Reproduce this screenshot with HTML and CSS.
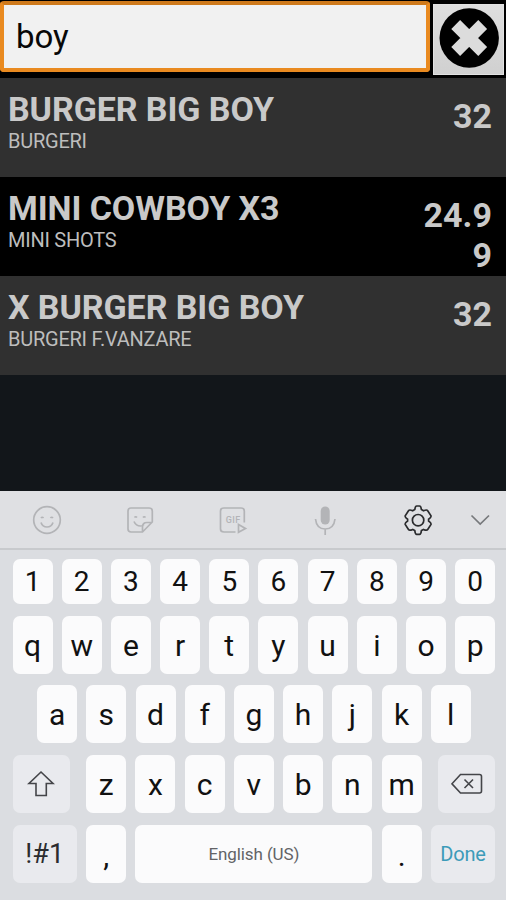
FILE: index.html
```html
<!DOCTYPE html>
<html lang="en">
<head>
<meta charset="utf-8">
<title>Product search</title>
<link rel="stylesheet" href="styles.css">
</head>
<body>
<main class="screen">
  <header class="search">
    <div class="field">boy</div>
    <div class="clear">
      <svg width="60" height="60" viewBox="0 0 60 60"><circle cx="30.2" cy="30" r="29.700" fill="#000"/><path d="M16.700 16.500 43.700 43.500M43.700 16.500 16.700 43.500" stroke="#dcdcdc" stroke-width="12.500"/></svg>
    </div>
  </header>
  <section class="list">
    <article class="item"><div class="info"><div class="name">BURGER BIG BOY</div><div class="cat">BURGERI</div></div><div class="price">32</div></article>
    <article class="item dark"><div class="info"><div class="name">MINI COWBOY X3</div><div class="cat">MINI SHOTS</div></div><div class="price">24.99</div></article>
    <article class="item"><div class="info"><div class="name">X BURGER BIG BOY</div><div class="cat">BURGERI F.VANZARE</div></div><div class="price">32</div></article>
  </section>
  <section class="keyboard">
    <div class="tools">
      <svg class="tool" viewBox="0 0 32 32"><circle cx="16" cy="16" r="13.300"/><path d="M10 14q1.200-1.500 2.500 0M19.500 14q1.200-1.500 2.500 0M10 18.500q1.500 4.500 6 4.500t6-4.500"/></svg>
      <svg class="tool" viewBox="0 0 32 32"><path d="M7 4H25Q28.300 4 28.300 7V18L18.500 28H7Q4 28 4 25V7Q4 4 7 4ZM18.500 28V23Q18.500 18.500 23 18.500H28M10.500 13.500q1.200-1.500 2.500 0M19 13.500q1.200-1.500 2.500 0M10 17.500q2 4.500 6.500 4.500 2 0 3.500-1.500"/></svg>
      <svg class="tool" viewBox="0 0 32 32"><path d="M18.500 28H7Q3.500 28 3.500 25V7Q3.500 4 7 4H24Q27.300 4 27.300 7V18.500M21.500 20.500V28.300L28.500 24.400Z"/><text x="8.700" y="19.300">GIF</text></svg>
      <svg class="tool" viewBox="0 0 32 32"><rect class="solid" x="11.700" y="2.500" width="9" height="18" rx="4.500"/><path d="M6.500 15Q7.500 25 16.200 25T26 15M16.200 25V31"/></svg>
      <svg class="tool gear" viewBox="0 0 32 32"><path d="M12.800 5.600Q13.200 2 14.700 2H17.500Q19 2 19.400 5.600L21.500 6.800Q24.800 5.300 25.700 6.700L29 11.800Q29.500 13.300 26.600 15.300V17Q29.500 19 29 20.400L25.700 25.500Q24.800 26.900 21.500 25.400L19.400 26.600Q19 30.300 17.500 30.300H14.700Q13.200 30.300 12.800 26.600L10.700 25.400Q7.400 26.900 6.500 25.500L3.200 20.400Q2.700 19 5.600 17V15.300Q2.700 13.300 3.200 11.800L6.500 6.700Q7.400 5.300 10.700 6.800Z"/><circle cx="16.100" cy="16.200" r="5.700"/></svg>
      <svg class="tool chevron" viewBox="0 0 32 32"><path d="M7.500 11.500 16.200 20 25 11.500"/></svg>
    </div>
    <div class="keys">
      <div class="row digits"><span>1</span><span>2</span><span>3</span><span>4</span><span>5</span><span>6</span><span>7</span><span>8</span><span>9</span><span>0</span></div>
      <div class="row"><span>q</span><span>w</span><span>e</span><span>r</span><span>t</span><span>y</span><span>u</span><span>i</span><span>o</span><span>p</span></div>
      <div class="row middle"><span>a</span><span>s</span><span>d</span><span>f</span><span>g</span><span>h</span><span>j</span><span>k</span><span>l</span></div>
      <div class="row third">
        <span class="fn shift"><svg width="28" height="28" viewBox="0 0 28 28"><path d="M14 2 26 13.500H19.300V25.500H9V13.500H2Z"/></svg></span>
        <span>z</span><span>x</span><span>c</span><span>v</span><span>b</span><span>n</span><span>m</span>
        <span class="fn erase"><svg width="32" height="22" viewBox="0 0 32 22"><path d="M9.500 1.500H28.500Q30.500 1.500 30.500 3.500V18Q30.500 20 28.500 20H9.500L1 10.800ZM13.500 6.500 22 15M22 6.500 13.500 15"/></svg></span>
      </div>
      <div class="row bottom"><span class="fn symbols">!#1</span><span class="comma">,</span><span class="space">English (US)</span><span class="dot">.</span><span class="fn done">Done</span></div>
    </div>
  </section>
</main>
</body>
</html>
```
FILE: styles.css
```css
* { box-sizing: border-box; }
body { margin: 0; background: #12161a; font-family: Roboto, sans-serif; }
.screen { display: flex; flex-direction: column; width: 506px; height: 900px; overflow: hidden; }

.search { display: flex; height: 78px; padding-top: 1px; background: #000; }
.field {
  width: 430px; height: 71px; padding: 11.500px 12px 0;
  border: 4px solid #e98a20; border-top-color: #cf7a1c; border-radius: 4px;
  background: #f1f1f1; color: #080808; font-size: 33px; line-height: 40px;
}
.clear {
  display: flex; align-items: center; justify-content: center;
  width: 71px; height: 71px; margin: 2.500px 0 0 3px;
  border: 1px solid #e2e2e2; background: linear-gradient(#dedede, #d0d0d0);
}
.clear svg { margin-top: -2px; }

.item { display: flex; justify-content: space-between; height: 99px; padding: 10.500px 14px 0 8px; background: #303030; color: #c9c9c9; overflow: hidden; }
.item.dark { background: #000; }
.name { font-size: 34px; line-height: 40px; font-weight: 700; letter-spacing: -0.080px; white-space: nowrap; }
.cat { padding-top: 1px; font-size: 20px; line-height: 23px; letter-spacing: -0.250px; color: #bdbdbd; white-space: nowrap; }
.price { width: 70px; padding-top: 7px; font-size: 34px; line-height: 40px; font-weight: 700; text-align: right; word-break: break-all; }

.keyboard { height: 409px; margin-top: auto; background: #dbdde1; }
.tools { display: flex; align-items: center; height: 59px; padding-left: 31px; background: #dfe0e3; border-bottom: 2px solid #c8cacd; }
.tool { flex: none; width: 32px; height: 32px; margin-right: 60.800px; fill: none; stroke: #b3b4b7; stroke-width: 1.700; }
.tool text { fill: #b3b4b7; stroke: none; font: 500 9px Roboto, sans-serif; letter-spacing: 0.500px; }
.tool .solid { fill: #b3b4b7; stroke: none; }
.gear { margin-right: 30px; stroke: #2a2b2d; }
.chevron { margin-right: 0; stroke: #77797c; }

.keys { display: flex; flex-direction: column; gap: 11.700px; padding: 8.500px 10.700px 0 12.500px; }
.row { display: flex; justify-content: space-between; height: 58px; }
.row span { display: flex; align-items: center; justify-content: center; width: 40px; height: 100%; padding-top: 2px; border-radius: 7px; background: #fbfbfc; color: #111; font-size: 30px; line-height: 36px; }
.row.digits { height: 45.500px; }
.digits span { font-size: 28px; }
.row.middle { padding: 0 24.600px; }
.row .fn { padding-top: 0; background: #e9eaee; }
.third .fn { width: 57px; }
.row .shift { margin-right: 7.500px; }
.row .erase { margin-left: 7.500px; }
.fn svg { fill: none; stroke: #444549; stroke-width: 1.600; }
.row .symbols { width: 64.500px; font-size: 27px; color: #2b2c2e; }
.row .space { width: 237px; padding-top: 0; font-size: 17px; letter-spacing: -0.100px; color: #626366; }
.row .done { width: 64.500px; font-size: 20px; letter-spacing: -0.200px; color: #3c9bb9; }
.row .comma, .row .dot { padding-top: 5px; }
```
